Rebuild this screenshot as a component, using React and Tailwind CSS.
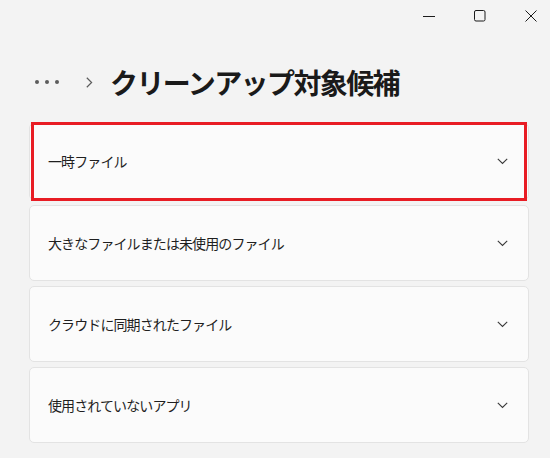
import React from 'react';

const items = [
  '一時ファイル',
  '大きなファイルまたは未使用のファイル',
  'クラウドに同期されたファイル',
  '使用されていないアプリ',
];

const Chevron = () => (
  <svg width="11" height="7" viewBox="0 0 11 7" fill="none">
    <path d="M0.8 0.8L5.5 5.5L10.2 0.8" stroke="#3a3a3a" strokeWidth="1.1" />
  </svg>
);

const WindowControls = () => (
  <div className="flex h-[32px] items-center justify-end gap-[39px] pr-[13px]">
    <svg width="12" height="12" viewBox="0 0 12 12">
      <path d="M0 6.5H12" stroke="#1b1b1b" strokeWidth="1" />
    </svg>
    <svg width="12" height="12" viewBox="0 0 12 12" fill="none">
      <rect x="0.5" y="0.5" width="10.5" height="10.5" rx="1.5" stroke="#1b1b1b" strokeWidth="1" />
    </svg>
    <svg width="12" height="12" viewBox="0 0 12 12" fill="none">
      <path d="M0.5 0.5L11.5 11.5M11.5 0.5L0.5 11.5" stroke="#1b1b1b" strokeWidth="1" />
    </svg>
  </div>
);

export default function App() {
  return (
    <div
      className="h-[458px] w-[550px] overflow-hidden bg-[#f3f3f3] text-[#1b1b1b]"
      style={{ fontFamily: '"Noto Sans CJK JP", "Noto Sans", sans-serif' }}
    >
      <WindowControls />

      {/* breadcrumb header */}
      <div className="mt-[30px] flex h-[40px] items-center pl-[35px]">
        <div className="flex items-center gap-[6px]">
          <span className="h-[4px] w-[4px] rounded-full bg-[#5c5c5c]" />
          <span className="h-[4px] w-[4px] rounded-full bg-[#5c5c5c]" />
          <span className="h-[4px] w-[4px] rounded-full bg-[#5c5c5c]" />
        </div>
        <svg className="ml-[27px]" width="7" height="11" viewBox="0 0 7 11" fill="none">
          <path d="M0.8 0.8L5.6 5.5L0.8 10.2" stroke="#5c5c5c" strokeWidth="1.2" />
        </svg>
        <h1 className="ml-[17px] text-[28px] font-bold leading-none tracking-[-1.6px] text-[#1a1a1a]">
          クリーンアップ対象候補
        </h1>
      </div>

      {/* cleanup categories */}
      <div className="ml-[29px] mt-[21px] flex w-[500px] flex-col gap-[5px]">
        {items.map((label, i) => (
          <div
            key={label}
            className={`relative flex items-center justify-between rounded-[5px] border border-[#e3e3e3] bg-[#fbfbfb] pl-[18px] pr-[20px] ${i === 0 ? 'h-[77px]' : 'h-[76px]'}`}
          >
            <span className="text-[14px] tracking-[-0.9px] text-[#1f1f1f]">{label}</span>
            <Chevron />
            {i === 0 && (
              <div className="pointer-events-none absolute -bottom-[2px] -top-[2px] left-[1px] right-[1px] border-[3px] border-[#e81c24]" />
            )}
          </div>
        ))}
      </div>
    </div>
  );
}
